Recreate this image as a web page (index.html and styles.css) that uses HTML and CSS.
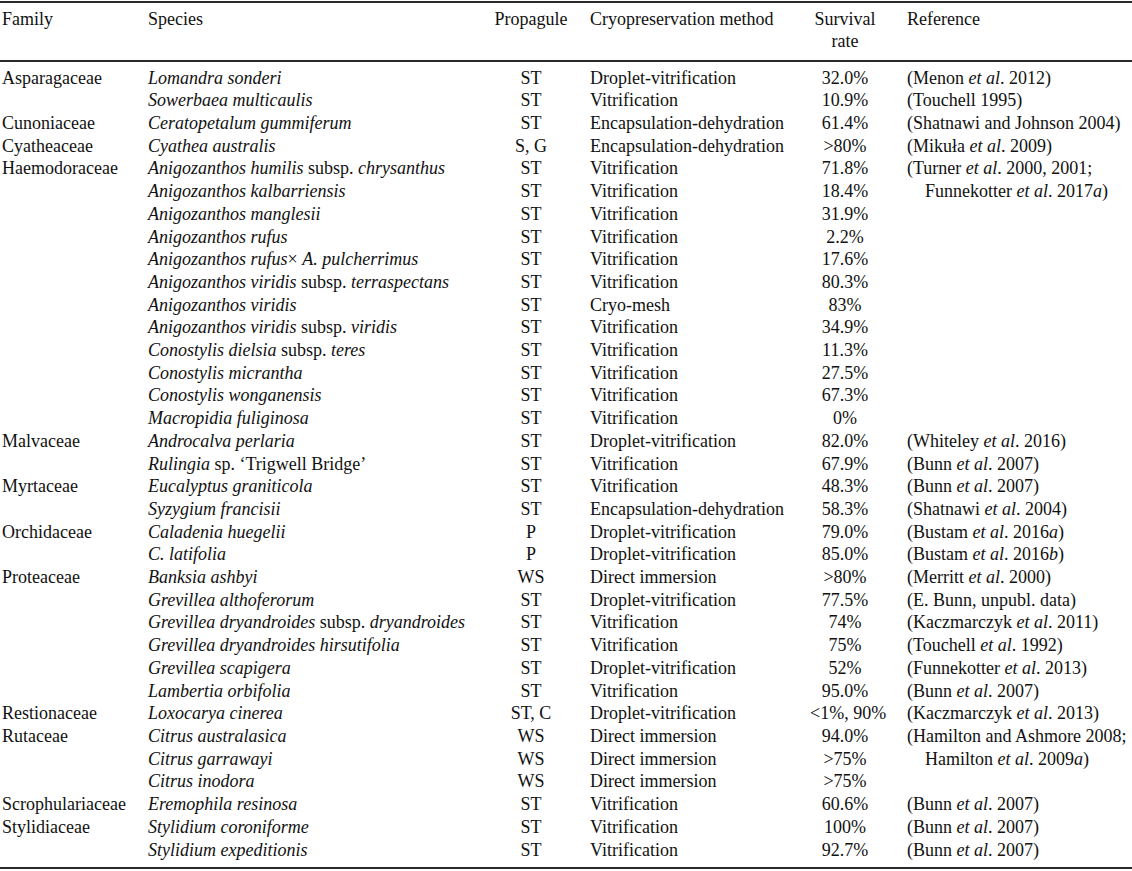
FILE: index.html
```html
<!DOCTYPE html>
<html>
<head>
<meta charset="utf-8">
<link rel="stylesheet" href="styles.css">
</head>
<body>
<table class="tbl">
<colgroup>
<col class="c-fam"><col class="c-sp"><col class="c-pr"><col class="c-me"><col class="c-su"><col class="c-re">
</colgroup>
<thead>
<tr>
<th class="fam">Family</th>
<th class="sp">Species</th>
<th class="pr">Propagule</th>
<th class="me">Cryopreservation method</th>
<th class="su">Survival<br>rate</th>
<th class="re">Reference</th>
</tr>
</thead>
<tbody>
<tr class="first"><td class="fam">Asparagaceae</td><td class="sp"><i>Lomandra sonderi</i></td><td class="pr">ST</td><td class="me">Droplet-vitrification</td><td class="su">32.0%</td><td class="re">(Menon <i>et al</i>. 2012)</td></tr>
<tr><td class="fam"></td><td class="sp"><i>Sowerbaea multicaulis</i></td><td class="pr">ST</td><td class="me">Vitrification</td><td class="su">10.9%</td><td class="re">(Touchell 1995)</td></tr>
<tr><td class="fam">Cunoniaceae</td><td class="sp"><i>Ceratopetalum gummiferum</i></td><td class="pr">ST</td><td class="me">Encapsulation-dehydration</td><td class="su">61.4%</td><td class="re">(Shatnawi and Johnson 2004)</td></tr>
<tr><td class="fam">Cyatheaceae</td><td class="sp"><i>Cyathea australis</i></td><td class="pr">S, G</td><td class="me">Encapsulation-dehydration</td><td class="su">&gt;80%</td><td class="re">(Mikuła <i>et al</i>. 2009)</td></tr>
<tr><td class="fam">Haemodoraceae</td><td class="sp"><i>Anigozanthos humilis</i> subsp. <i>chrysanthus</i></td><td class="pr">ST</td><td class="me">Vitrification</td><td class="su">71.8%</td><td class="re">(Turner <i>et al</i>. 2000, 2001;</td></tr>
<tr><td class="fam"></td><td class="sp"><i>Anigozanthos kalbarriensis</i></td><td class="pr">ST</td><td class="me">Vitrification</td><td class="su">18.4%</td><td class="re cont">Funnekotter <i>et al</i>. 2017<i>a</i>)</td></tr>
<tr><td class="fam"></td><td class="sp"><i>Anigozanthos manglesii</i></td><td class="pr">ST</td><td class="me">Vitrification</td><td class="su">31.9%</td><td class="re"></td></tr>
<tr><td class="fam"></td><td class="sp"><i>Anigozanthos rufus</i></td><td class="pr">ST</td><td class="me">Vitrification</td><td class="su">2.2%</td><td class="re"></td></tr>
<tr><td class="fam"></td><td class="sp"><i>Anigozanthos rufus</i>× <i>A. pulcherrimus</i></td><td class="pr">ST</td><td class="me">Vitrification</td><td class="su">17.6%</td><td class="re"></td></tr>
<tr><td class="fam"></td><td class="sp"><i>Anigozanthos viridis</i> subsp. <i>terraspectans</i></td><td class="pr">ST</td><td class="me">Vitrification</td><td class="su">80.3%</td><td class="re"></td></tr>
<tr><td class="fam"></td><td class="sp"><i>Anigozanthos viridis</i></td><td class="pr">ST</td><td class="me">Cryo-mesh</td><td class="su">83%</td><td class="re"></td></tr>
<tr><td class="fam"></td><td class="sp"><i>Anigozanthos viridis</i> subsp. <i>viridis</i></td><td class="pr">ST</td><td class="me">Vitrification</td><td class="su">34.9%</td><td class="re"></td></tr>
<tr><td class="fam"></td><td class="sp"><i>Conostylis dielsia</i> subsp. <i>teres</i></td><td class="pr">ST</td><td class="me">Vitrification</td><td class="su">11.3%</td><td class="re"></td></tr>
<tr><td class="fam"></td><td class="sp"><i>Conostylis micrantha</i></td><td class="pr">ST</td><td class="me">Vitrification</td><td class="su">27.5%</td><td class="re"></td></tr>
<tr><td class="fam"></td><td class="sp"><i>Conostylis wonganensis</i></td><td class="pr">ST</td><td class="me">Vitrification</td><td class="su">67.3%</td><td class="re"></td></tr>
<tr><td class="fam"></td><td class="sp"><i>Macropidia fuliginosa</i></td><td class="pr">ST</td><td class="me">Vitrification</td><td class="su">0%</td><td class="re"></td></tr>
<tr><td class="fam">Malvaceae</td><td class="sp"><i>Androcalva perlaria</i></td><td class="pr">ST</td><td class="me">Droplet-vitrification</td><td class="su">82.0%</td><td class="re">(Whiteley <i>et al</i>. 2016)</td></tr>
<tr><td class="fam"></td><td class="sp"><i>Rulingia</i> sp. ‘Trigwell Bridge’</td><td class="pr">ST</td><td class="me">Vitrification</td><td class="su">67.9%</td><td class="re">(Bunn <i>et al</i>. 2007)</td></tr>
<tr><td class="fam">Myrtaceae</td><td class="sp"><i>Eucalyptus graniticola</i></td><td class="pr">ST</td><td class="me">Vitrification</td><td class="su">48.3%</td><td class="re">(Bunn <i>et al</i>. 2007)</td></tr>
<tr><td class="fam"></td><td class="sp"><i>Syzygium francisii</i></td><td class="pr">ST</td><td class="me">Encapsulation-dehydration</td><td class="su">58.3%</td><td class="re">(Shatnawi <i>et al</i>. 2004)</td></tr>
<tr><td class="fam">Orchidaceae</td><td class="sp"><i>Caladenia huegelii</i></td><td class="pr">P</td><td class="me">Droplet-vitrification</td><td class="su">79.0%</td><td class="re">(Bustam <i>et al</i>. 2016<i>a</i>)</td></tr>
<tr><td class="fam"></td><td class="sp"><i>C. latifolia</i></td><td class="pr">P</td><td class="me">Droplet-vitrification</td><td class="su">85.0%</td><td class="re">(Bustam <i>et al</i>. 2016<i>b</i>)</td></tr>
<tr><td class="fam">Proteaceae</td><td class="sp"><i>Banksia ashbyi</i></td><td class="pr">WS</td><td class="me">Direct immersion</td><td class="su">&gt;80%</td><td class="re">(Merritt <i>et al</i>. 2000)</td></tr>
<tr><td class="fam"></td><td class="sp"><i>Grevillea althoferorum</i></td><td class="pr">ST</td><td class="me">Droplet-vitrification</td><td class="su">77.5%</td><td class="re">(E. Bunn, unpubl. data)</td></tr>
<tr><td class="fam"></td><td class="sp"><i>Grevillea dryandroides</i> subsp. <i>dryandroides</i></td><td class="pr">ST</td><td class="me">Vitrification</td><td class="su">74%</td><td class="re">(Kaczmarczyk <i>et al</i>. 2011)</td></tr>
<tr><td class="fam"></td><td class="sp"><i>Grevillea dryandroides hirsutifolia</i></td><td class="pr">ST</td><td class="me">Vitrification</td><td class="su">75%</td><td class="re">(Touchell <i>et al</i>. 1992)</td></tr>
<tr><td class="fam"></td><td class="sp"><i>Grevillea scapigera</i></td><td class="pr">ST</td><td class="me">Droplet-vitrification</td><td class="su">52%</td><td class="re">(Funnekotter <i>et al</i>. 2013)</td></tr>
<tr><td class="fam"></td><td class="sp"><i>Lambertia orbifolia</i></td><td class="pr">ST</td><td class="me">Vitrification</td><td class="su">95.0%</td><td class="re">(Bunn <i>et al</i>. 2007)</td></tr>
<tr><td class="fam">Restionaceae</td><td class="sp"><i>Loxocarya cinerea</i></td><td class="pr">ST, C</td><td class="me">Droplet-vitrification</td><td class="su">&lt;1%, 90%</td><td class="re">(Kaczmarczyk <i>et al</i>. 2013)</td></tr>
<tr><td class="fam">Rutaceae</td><td class="sp"><i>Citrus australasica</i></td><td class="pr">WS</td><td class="me">Direct immersion</td><td class="su">94.0%</td><td class="re">(Hamilton and Ashmore 2008;</td></tr>
<tr><td class="fam"></td><td class="sp"><i>Citrus garrawayi</i></td><td class="pr">WS</td><td class="me">Direct immersion</td><td class="su">&gt;75%</td><td class="re cont">Hamilton <i>et al</i>. 2009<i>a</i>)</td></tr>
<tr><td class="fam"></td><td class="sp"><i>Citrus inodora</i></td><td class="pr">WS</td><td class="me">Direct immersion</td><td class="su">&gt;75%</td><td class="re"></td></tr>
<tr><td class="fam">Scrophulariaceae</td><td class="sp"><i>Eremophila resinosa</i></td><td class="pr">ST</td><td class="me">Vitrification</td><td class="su">60.6%</td><td class="re">(Bunn <i>et al</i>. 2007)</td></tr>
<tr><td class="fam">Stylidiaceae</td><td class="sp"><i>Stylidium coroniforme</i></td><td class="pr">ST</td><td class="me">Vitrification</td><td class="su">100%</td><td class="re">(Bunn <i>et al</i>. 2007)</td></tr>
<tr class="last"><td class="fam"></td><td class="sp"><i>Stylidium expeditionis</i></td><td class="pr">ST</td><td class="me">Vitrification</td><td class="su">92.7%</td><td class="re">(Bunn <i>et al</i>. 2007)</td></tr>
</tbody>
</table>
</body>
</html>
```
FILE: styles.css
```css
html, body {
  margin: 0;
  padding: 0;
  background: #ffffff;
}
body {
  padding-top: 1px;
  font-family: "Liberation Serif", "Times New Roman", serif;
  font-size: 18px;
  color: #111111;
}
.tbl {
  width: 1132px;
  table-layout: fixed;
  border-collapse: collapse;
  border-top: 2px solid #2a2a2a;
  border-bottom: 2px solid #2a2a2a;
}
.c-fam { width: 146px; }
.c-sp { width: 346px; }
.c-pr { width: 78px; }
.c-me { width: 240px; }
.c-su { width: 70px; }
.c-re { width: 252px; }
th, td {
  padding: 0;
  line-height: 22.7px;
  height: 22.7px;
  white-space: nowrap;
  vertical-align: top;
  font-weight: normal;
  text-align: left;
}
thead th {
  padding-top: 4.6px;
  padding-bottom: 7px;
  border-bottom: 2px solid #2a2a2a;
}
tbody tr.first td { padding-top: 4.6px; }
tbody tr.last td { padding-bottom: 6px; }
.fam { padding-left: 2px; }
.sp { padding-left: 2px; }
.pr { text-align: center; }
.me { padding-left: 20px; }
th.su, td.su { text-align: center; }
.re { padding-left: 27px; }
td.re.cont { padding-left: 45px; }
```
